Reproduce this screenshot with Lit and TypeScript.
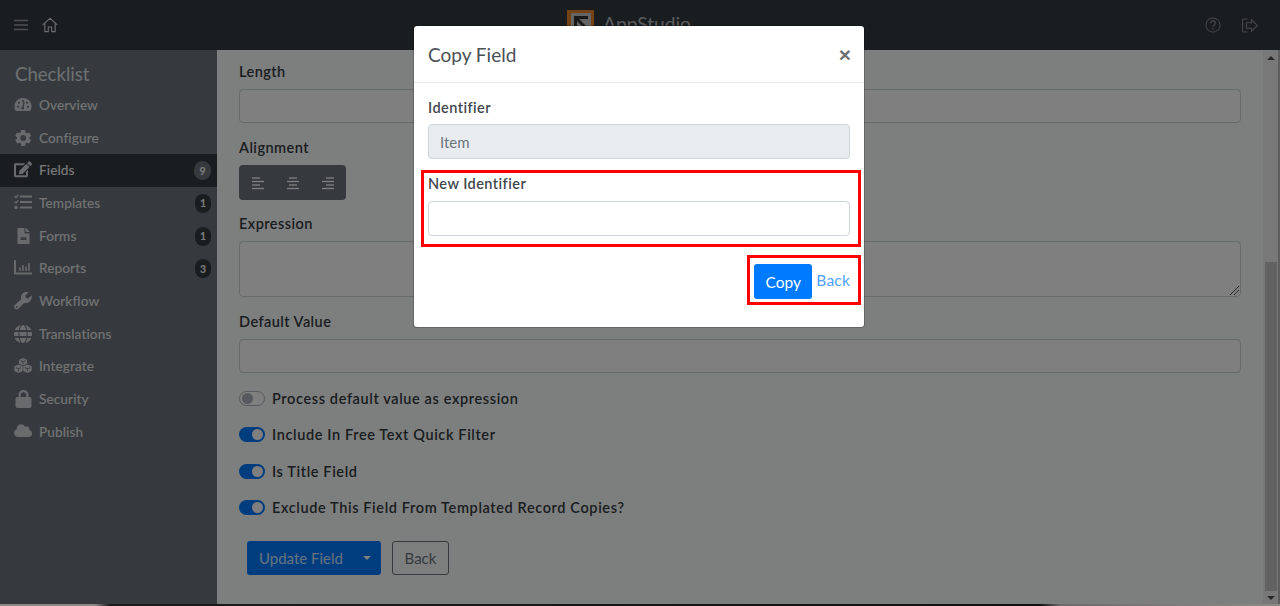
import { LitElement, html, css, svg } from "lit";
import { customElement } from "lit/decorators.js";

const F = "currentColor";
const icons: Record<string, unknown> = {
  overview: svg`<path fill=${F} d="M9 2C4 2 .5 6 .5 10.500c0 1.600.4 2.900 1 4 .2.300.5.500.9.500h13.200c.4 0 .7-.2.9-.5.6-1.100 1-2.400 1-4C17.500 6 14 2 9 2Zm0 2c.6 0 1 .4 1 1s-.4 1-1 1-1-.4-1-1 .4-1 1-1ZM4 11.800c-.6 0-1-.4-1-1s.4-1 1-1 1 .4 1 1-.4 1-1 1Zm1-4c-.6 0-1-.4-1-1s.4-1 1-1 1 .4 1 1-.4 1-1 1Zm4.200 5.700c-.9.200-1.700-.4-1.900-1.200-.1-.8.400-1.500 1.100-1.700l1.100-4.300c.1-.3.400-.5.700-.4.300.1.500.4.400.7l-1.100 4.300c.5.400.8 1.200.5 1.800-.2.400-.4.700-.8.800ZM13 7.800c-.6 0-1-.4-1-1s.4-1 1-1 1 .4 1 1-.4 1-1 1Zm1 4c-.6 0-1-.4-1-1s.4-1 1-1 1 .4 1 1-.4 1-1 1Z"/>`,
  configure: svg`<path transform="translate(.5 0)" fill=${F} d="M16.300 10.700 14.800 9.800c.1-.6.100-1.100 0-1.600l1.500-.9c.2-.1.300-.3.200-.5-.4-1.200-1-2.300-1.900-3.200-.1-.2-.4-.2-.5-.1l-1.500.9c-.5-.4-1.100-.8-1.700-1V1.600c0-.2-.2-.4-.4-.5C9.300.8 8.100.8 6.900 1.100c-.2 0-.4.200-.4.500v1.700c-.6.200-1.200.6-1.700 1l-1.500-.9c-.2-.1-.4-.1-.5.100-.9.900-1.500 2-1.900 3.200-.1.200 0 .4.200.5l1.500.9c-.1.500-.1 1.100 0 1.600l-1.500.9c-.2.100-.3.300-.2.500.4 1.200 1 2.300 1.900 3.200.1.200.4.200.5.100l1.500-.9c.5.400 1.100.8 1.700 1v1.700c0 .2.200.4.400.5 1.200.3 2.400.3 3.600 0 .2 0 .4-.3.400-.5v-1.700c.6-.2 1.200-.6 1.700-1l1.500.9c.2.100.4.100.5-.1.900-.9 1.500-2 1.900-3.200.1-.2 0-.4-.2-.5ZM8.700 12c-1.700 0-3-1.300-3-3s1.300-3 3-3 3 1.300 3 3-1.300 3-3 3Z"/>`,
  fields: svg`<path fill=${F} d="m12.600 2.900 2.800 2.800c.1.100.1.300 0 .4l-6.800 6.800-2.900.3c-.4.100-.7-.3-.7-.6l.4-2.900 6.800-6.800c.1-.1.300-.1.400 0Zm5-.7L16.100.7c-.5-.5-1.200-.5-1.700 0l-1.100 1.100c-.1.100-.1.300 0 .4l2.800 2.800c.1.100.3.100.4 0l1.100-1.100c.5-.5.500-1.200 0-1.700ZM12 11v3.200H2V4.200h7.200c.1 0 .2 0 .3-.1l1.200-1.200c.2-.2.100-.7-.3-.7H1.500C.7 2.200 0 2.900 0 3.700v11c0 .8.700 1.500 1.500 1.500h11c.8 0 1.500-.7 1.500-1.500V9.800c0-.4-.5-.6-.8-.3l-1.200 1.200c-.1.100 0 .2 0 .3Z"/>`,
  templates: svg`<g fill="none" stroke=${F}><path stroke-width="1.300" d="m.7 2.300 1.300 1.200L4.300.8M.7 7.800 2 9l2.300-2.700"/><path stroke-width="2" d="M6 2.500h12M6 8h12M6 13.500h12"/></g><circle fill=${F} cx="2" cy="13.500" r="1.700"/>`,
  forms: svg`<path transform="translate(2.500 1)" fill=${F} d="M8 5V0H1.800C1.300 0 1 .3 1 .8v14.400c0 .5.300.8.800.8h10.400c.5 0 .8-.3.800-.8V5.500H8.800C8.300 5.500 8 5.300 8 5Zm2 6.600c0 .2-.2.400-.4.400H4.400c-.2 0-.4-.2-.4-.4v-.2c0-.2.200-.4.400-.4h5.200c.2 0 .4.200.4.400Zm0-2v.8c0 .2-.2.400-.4.400H4.400c-.2 0-.4-.2-.4-.4v-.8c0-.2.200-.4.400-.4h5.200c.2 0 .4.200.4.400ZM13 3.800V4H9V0h.2c.2 0 .4.100.5.200l3.100 3.100c.1.100.2.300.2.500Z"/>`,
  reports: svg`<path fill=${F} d="M17.500 13.500H2V1.800c0-.4-.3-.8-.7-.8H.7c-.4 0-.7.400-.7.800v12.700c0 .6.500 1 1 1h16.500c.3 0 .5-.2.500-.5v-1c0-.3-.2-.5-.5-.5ZM5.500 12h.8c.2 0 .4-.2.400-.4V8.900c0-.2-.2-.4-.4-.4h-.8c-.2 0-.4.200-.4.400v2.700c0 .2.200.4.400.4Zm3 0h.8c.2 0 .4-.2.400-.4V6.400c0-.2-.2-.4-.4-.4h-.8c-.2 0-.4.200-.4.400v5.200c0 .2.200.4.400.4Zm3 0h.8c.2 0 .4-.2.400-.4V7.900c0-.2-.2-.4-.4-.4h-.8c-.2 0-.4.200-.4.400v3.700c0 .2.200.4.400.4Zm3 0h.8c.2 0 .4-.2.400-.4V4.400c0-.2-.2-.4-.4-.4h-.8c-.2 0-.4.200-.4.400v7.200c0 .2.200.4.400.4Z"/>`,
  workflow: svg`<path fill=${F} d="M17.800 3.900c-.1-.3-.5-.4-.7-.2l-2.800 2.800-2.500-.4-.4-2.500L14.200.8c.2-.2.100-.6-.2-.7-1.900-.5-4 .1-5.400 1.500-1.500 1.500-2 3.700-1.400 5.700L.8 13.100c-1 1-1 2.600 0 3.600s2.600 1 3.600 0l5.800-5.800c2 .5 4.100 0 5.600-1.500 1.500-1.500 2-3.600 2-5.500ZM2.600 15.800c-.5 0-.9-.4-.9-.9s.4-.9.900-.9.900.4.900.9-.4.900-.9.900Z"/>`,
  translations: svg`<path fill=${F} d="M12.200 5C11.600 1.900 10.400 0 9 0S6.400 1.900 5.800 5h6.400ZM5.500 9c0 .7 0 1.400.1 2h6.800c.1-.6.100-1.300.1-2s0-1.400-.1-2H5.600c-.1.600-.1 1.300-.1 2Zm11.800-4C16.200 2.500 14 .7 11.500.2c.9 1.200 1.400 3 1.700 4.800h4.100ZM6.500.2C4 .7 1.800 2.500.7 5h4.100C5.100 3.200 5.600 1.400 6.500.2Zm11.200 6.800h-4.300c.1.700.1 1.300.1 2s0 1.300-.1 2h4.300c.2-.6.300-1.300.3-2s-.1-1.400-.3-2ZM4.500 9c0-.7 0-1.300.1-2H.3C.1 7.600 0 8.300 0 9s.1 1.400.3 2h4.300c-.1-.7-.1-1.300-.1-2Zm1.300 4c.6 3.100 1.800 5 3.200 5s2.600-1.900 3.200-5H5.800Zm5.700 4.800c2.500-.5 4.700-2.300 5.800-4.800h-4.100c-.3 1.800-.8 3.600-1.700 4.800ZM.7 13c1.100 2.500 3.300 4.300 5.800 4.800-.9-1.200-1.400-3-1.700-4.800H.7Z"/>`,
  integrate: svg`<path fill=${F} d="M13 6.700V2.700L9 1 5 2.700v4l4 1.800ZM8.700 9.300 4.500 7.400.3 9.300v4.600l4.200 2 4.200-2Zm9 0-4.200-1.900-4.200 1.900v4.600l4.200 2 4.200-2Z"/><path fill="#6c757d" d="M9 4.300 6.700 3.300l-.5.600L8.600 5v2h.8V5l2.400-1.100-.5-.6Zm-4.500 7L2.200 10.300l-.5.600 2.400 1.100v2.300h.8V12l2.400-1.100-.5-.6Zm9 0-2.300-1-.5.600 2.400 1.100v2.300h.8V12l2.400-1.100-.5-.6Z"/>`,
  security: svg`<path transform="translate(1.500 0)" fill=${F} d="M14 7h-1V4.800C13 2.100 10.800 0 8 0S3 2.100 3 4.800V7H2C.9 7 0 7.900 0 9v7c0 1.100.9 2 2 2h12c1.100 0 2-.9 2-2V9c0-1.100-.9-2-2-2Zm-3.200 0H5.200V4.800C5.200 3.300 6.400 2.200 8 2.200s2.800 1.100 2.800 2.600Z"/>`,
  publish: svg`<path fill=${F} d="M15.100 6.800c.1-.3.200-.6.200-.9 0-1.500-1.200-2.700-2.700-2.700-.5 0-1 .2-1.500.5C10.300 2.200 8.900 1.300 7.200 1.300 4.700 1.300 2.700 3.300 2.700 5.800v.4C1.100 6.700 0 8.300 0 10c0 2.200 1.800 4 4 4h11.200c1.600 0 2.800-1.400 2.800-3.600 0-1.700-1.200-3.100-2.900-3.600Z"/>`,
};

const nav: [string, string, string?, boolean?][] = [
  ["Overview", "overview"],
  ["Configure", "configure"],
  ["Fields", "fields", "9", true],
  ["Templates", "templates", "1"],
  ["Forms", "forms", "1"],
  ["Reports", "reports", "3"],
  ["Workflow", "workflow"],
  ["Translations", "translations"],
  ["Integrate", "integrate"],
  ["Security", "security"],
  ["Publish", "publish"],
];

@customElement("app-root")
export class AppRoot extends LitElement {
  static styles = css`
    :host {
      display: block;
      position: relative;
      width: 1280px;
      height: 606px;
      overflow: hidden;
      font-family: "Lato", "Noto Sans", sans-serif;
      color: #212529;
      background: #fff;
    }
    * { box-sizing: border-box; }
    .page { display: flex; flex-direction: column; height: 100%; }
    .top {
      flex: 0 0 50px;
      background: #343a40;
      display: flex;
      align-items: center;
      padding: 0 14px;
      color: #9aa0a6;
    }
    .top .left { display: flex; align-items: center; gap: 14px; width: 553px; }
    .top .right { margin-left: auto; display: flex; gap: 21px; align-items: center; margin-right: 8px; }
    .brand { display: flex; align-items: center; gap: 9px; font-size: 19.200px; color: #b5b8ba; margin-top: -3px; }
    .logo { width: 27px; height: 27px; flex: none; }
    .body { flex: 1; display: flex; min-height: 0; }
    .side {
      flex: 0 0 217px;
      background: #6c757d;
      color: #e9ecef;
      padding-top: 10px;
    }
    .side h2 {
      margin: 0 0 0 15px;
      font-weight: 400;
      font-size: 18.600px;
      line-height: 28px;
      color: #dde0e3;
    }
    .nav { display: flex; flex-direction: column; margin-top: 1px; }
    .item {
      height: 32.700px;
      display: flex;
      align-items: center;
      padding: 0 6px 1px 14px;
      font-size: 13.600px;
      font-weight: 500;
      color: #e4e6e8;
    }
    .item.on { background: #343a40; color: #f2f3f4; }
    .item .ic { width: 18px; height: 18px; flex: none; margin-right: 7px; color: #d2d5d8; }
    .item .t { flex: 1; letter-spacing: 0.1px; }
    .badge {
      min-width: 16px;
      height: 19px;
      padding: 0 4px;
      border-radius: 10px;
      background: #343a40;
      color: #f8f9fa;
      font-size: 10.500px;
      font-weight: 700;
      display: flex;
      align-items: center;
      justify-content: center;
      margin-top: 1px;
    }
    .item.on .badge { background: #6c757d; min-width: 17px; }
    .main {
      flex: 1;
      display: flex;
      min-width: 0;
      background: #fbfefc;
      border-right: 2px solid #bdbdbd;
    }
    .content { flex: 1; min-width: 0; padding: 13px 22px 0 22px; }
    .scroll {
      flex: 0 0 15px;
      background: #f1f1f1;
      display: flex;
      flex-direction: column;
      align-items: center;
      padding: 6px 0 6px;
    }
    .arrow { width: 0; height: 0; border-left: 4px solid transparent; border-right: 4px solid transparent; flex: none; }
    .arrow.u { border-bottom: 4px solid #505050; }
    .arrow.d { border-top: 4px solid #505050; margin-top: 5px; }
    .thumb { width: 12px; flex: 0 0 329px; background: #c4c4c4; margin-top: auto; }
    label, .lab {
      display: block;
      font-size: 14.500px;
      font-weight: 600;
      line-height: 18px;
      color: #343a40;
      letter-spacing: 0.45px;
    }
    .inp {
      display: block;
      height: 34px;
      margin-top: 8px;
      border: 1px solid #ced4da;
      border-radius: 4px;
      background: #fff;
    }
    .ta { height: 56px; position: relative; }
    .grip { position: absolute; right: 1px; bottom: 1px; width: 9px; height: 9px; }
    .f1 { margin-bottom: 16px; }
    .f1.al { margin-bottom: 15px; }
    .f2 { margin-bottom: 16px; }
    .group {
      margin-top: 8px;
      width: 107px;
      height: 35px;
      background: #6c757d;
      border-radius: 4px;
      display: flex;
      align-items: center;
      gap: 21px;
      padding: 0 12px;
      color: #fff;
    }
    .group svg { width: 14px; height: 14px; flex: none; }
    .sw { display: flex; align-items: center; height: 18px; font-size: 14.500px; font-weight: 600; color: #343a40; gap: 7px; letter-spacing: 0.62px; }
    .sw + .sw { margin-top: 18.300px; }
    .sws { margin-top: 16.500px; }
    .tg { width: 26px; height: 15px; border-radius: 8px; position: relative; flex: none; background: #007bff; }
    .tg::after { content: ""; position: absolute; top: 2px; right: 2px; width: 11px; height: 11px; border-radius: 50%; background: #fff; }
    .tg.off { background: #fff; border: 1px solid #adb5bd; }
    .tg.off::after { background: #adb5bd; left: 2px; right: auto; top: 1px; }
    .acts { display: flex; margin: 24.500px 0 0 8px; gap: 11px; }
    .btn { height: 34px; display: flex; align-items: center; border-radius: 3px; font-size: 15px; }
    .primary { width: 134px; background: #007bff; color: #cfe5ff; padding-left: 12px; }
    .caret { margin-left: 20px; width: 0; height: 0; border-left: 4.500px solid transparent; border-right: 4.500px solid transparent; border-top: 4.500px solid #fff; }
    .ghost { width: 57px; justify-content: center; border: 1px solid #6c757d; color: #6c757d; }
    .strip {
      position: absolute; left: 0; right: 0; bottom: 0; height: 2px;
      background: linear-gradient(90deg, #8c8884 0, #8c8884 95px, #1c1c1c 110px, #111 1040px, #6e6c6a 1060px, #8c8884 1280px);
    }
    .scrim { position: absolute; inset: 0; background: rgba(0,0,0,.5); display: flex; justify-content: center; align-items: flex-start; padding-top: 25px; }
    .modal {
      width: 452px;
      height: 303px;
      margin-left: -2px;
      background: #fff;
      border-radius: 4px;
      border: 1px solid rgba(0,0,0,.2);
      background-clip: padding-box;
      display: flex;
      flex-direction: column;
      color: #343a40;
    }
    .mh {
      flex: 0 0 57px;
      border-bottom: 1px solid #e9ecef;
      display: flex;
      align-items: center;
      justify-content: space-between;
      padding: 0 13px 0 14px;
    }
    .mh h5 { margin: 0; font-size: 19px; font-weight: 400; color: #4a5056; }
    .x { font-size: 21px; font-weight: 700; color: #6d7073; line-height: 1; font-family: "Liberation Sans", sans-serif; }
    .mb { padding: 16px 14px 0; flex: 1; display: flex; flex-direction: column; }
    .mb .lab { color: #42474c; }
    .mb .inp.dis { background: #e9ecef; height: 35px; margin-top: 7px; padding: 0 11px; display: flex; align-items: center; font-size: 15px; color: #6c757d; }
    .mark { outline: 3px solid #f00; }
    .newid { margin: 14px -8px 0 -4px; padding: 2px 8px 8px 4px; }
    .newid .inp { height: 35px; margin-top: 8px; }
    .foot { align-self: flex-end; display: flex; align-items: center; margin: 14px -8px 0 0; padding: 6px 8px 3px 4px; gap: 4px; }
    .copy { width: 58px; height: 35px; background: #007bff; color: #fff; border-radius: 3px; font-size: 15.500px; display: flex; align-items: center; justify-content: center; }
    .link { color: #4ea1ff; font-size: 15.500px; margin-top: -4px; letter-spacing: .2px; }
  `;

  private line(a: string, b: string, c: string, d: string) {
    return svg`<svg viewBox="0 0 14 14" fill="none" stroke="currentColor" stroke-width="1.300"><path d="${a}"/><path d="${b}"/><path d="${c}"/><path d="${d}"/></svg>`;
  }

  render() {
    return html`
      <div class="page">
        <header class="top">
          <div class="left">
            <svg width="14" height="14" viewBox="0 0 14 14" stroke="currentColor" stroke-width="1.500"><path d="M0 2.500h14M0 7h14M0 11.500h14"/></svg>
            <svg width="16" height="16" viewBox="0 0 16 16" fill="none" stroke="#d5d8da" stroke-width="1.100"><path d="M.7 7.800 8 1.300l7.300 6.500M2.800 6.300v8.300h3.500V10h3.400v4.600h3.500V6.300"/></svg>
          </div>
          <div class="brand">
            <svg class="logo" viewBox="0 0 27 27"><rect width="27" height="27" fill="#e8842a"/><rect x="4" y="3" width="20" height="21" fill="#c9c9c9"/><path d="M7 6h14v3H12l9 9-2 2-9-9v9H7Z" fill="#333"/></svg>
            <span>AppStudio</span>
          </div>
          <div class="right">
            <svg width="16" height="16" viewBox="0 0 17 17" fill="none" stroke="#888c90" stroke-width="1.100"><circle cx="8.500" cy="8.500" r="7.500"/><path stroke-width="1.300" d="M6 6.600C6 5 7.200 4.200 8.500 4.200S11 5 11 6.500c0 2-2.500 1.800-2.500 3.800"/><path stroke-width="1.500" d="M8.500 11.800v1.500"/></svg>
            <svg width="16" height="15" viewBox="0 0 16 15" fill="none" stroke="#888c90" stroke-width="1.100"><path d="M5.500 1H2a1.500 1.500 0 0 0-1.500 1.500v10A1.500 1.500 0 0 0 2 14h3.500"/><path d="M9.500 1.800v3H4.500v5.400h5v3l6-5.700Z"/></svg>
          </div>
        </header>
        <div class="body">
          <aside class="side">
            <h2>Checklist</h2>
            <nav class="nav">
              ${nav.map(
                ([t, ic, b, on]) => html`
                  <div class="item ${on ? "on" : ""}">
                    <svg class="ic" viewBox="0 0 18 18">${icons[ic]}</svg>
                    <span class="t">${t}</span>
                    ${b ? html`<span class="badge">${b}</span>` : ""}
                  </div>
                `,
              )}
            </nav>
          </aside>
          <main class="main">
            <div class="content">
              <div class="f1"><label>Length</label><div class="inp"></div></div>
              <div class="f1 al">
                <label>Alignment</label>
                <div class="group">
                  ${this.line("M1 2h8", "M1 5.500h12", "M1 9h8", "M1 12.500h12")}
                  ${this.line("M3 2h8", "M1 5.500h12", "M3 9h8", "M1 12.500h12")}
                  ${this.line("M5 2h8", "M1 5.500h12", "M5 9h8", "M1 12.500h12")}
                </div>
              </div>
              <div class="f2">
                <label>Expression</label>
                <div class="inp ta">
                  <svg class="grip" viewBox="0 0 9 9" stroke="#555" stroke-width="1"><path d="M0 9 9 0M4 9l5-5"/></svg>
                </div>
              </div>
              <div><label>Default Value</label><div class="inp"></div></div>
              <div class="sws">
                <div class="sw"><span class="tg off"></span>Process default value as expression</div>
                <div class="sw"><span class="tg"></span>Include In Free Text Quick Filter</div>
                <div class="sw"><span class="tg"></span>Is Title Field</div>
                <div class="sw"><span class="tg"></span>Exclude This Field From Templated Record Copies?</div>
              </div>
              <div class="acts">
                <div class="btn primary">Update Field<span class="caret"></span></div>
                <div class="btn ghost">Back</div>
              </div>
            </div>
            <div class="scroll">
              <span class="arrow u"></span>
              <span class="thumb"></span>
              <span class="arrow d"></span>
            </div>
          </main>
        </div>
      </div>
      <div class="scrim">
        <section class="modal">
          <div class="mh"><h5>Copy Field</h5><span class="x">×</span></div>
          <div class="mb">
            <div class="lab">Identifier</div>
            <div class="inp dis">Item</div>
            <div class="newid mark">
              <div class="lab">New Identifier</div>
              <div class="inp"></div>
            </div>
            <div class="foot mark">
              <div class="copy">Copy</div>
              <div class="link">Back</div>
            </div>
          </div>
        </section>
      </div>
      <div class="strip"></div>
    `;
  }
}
